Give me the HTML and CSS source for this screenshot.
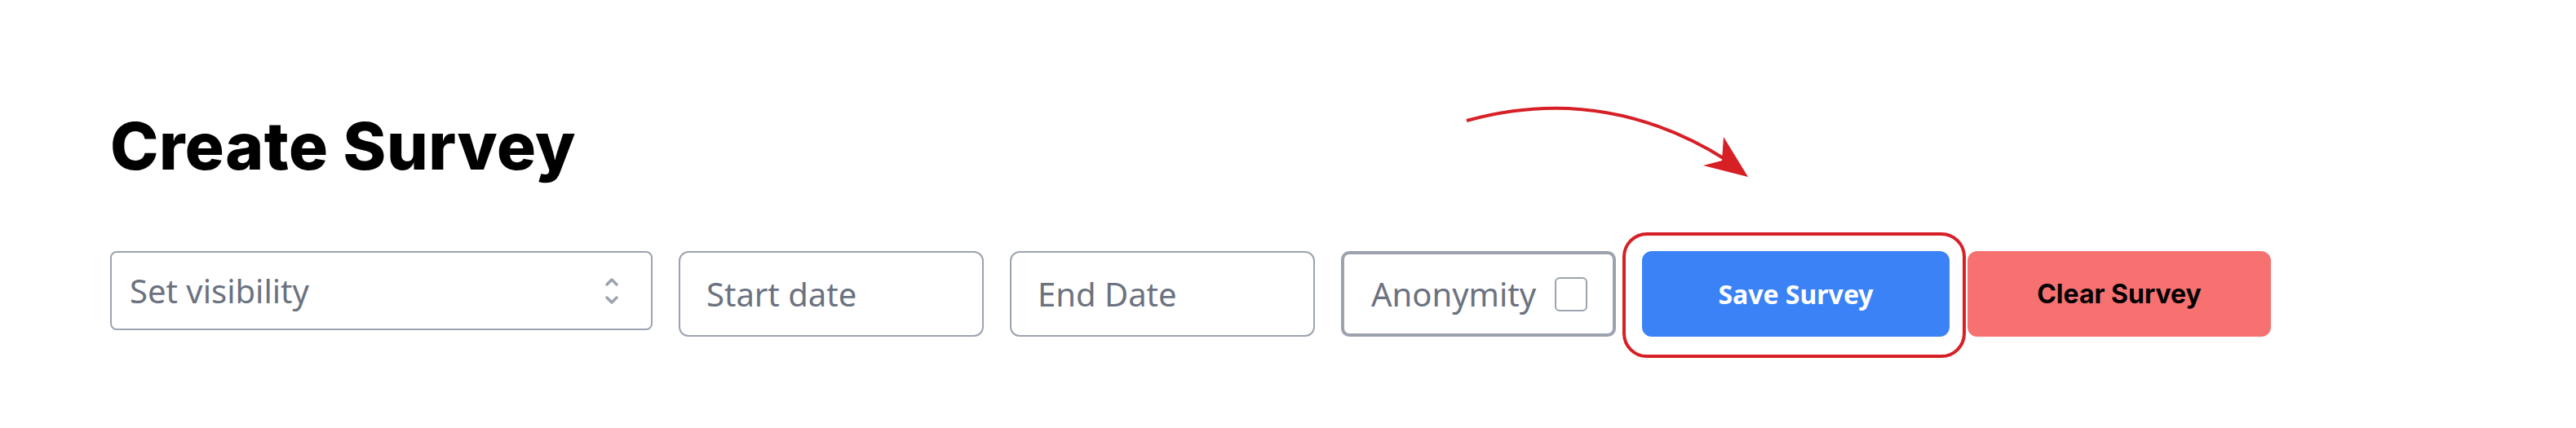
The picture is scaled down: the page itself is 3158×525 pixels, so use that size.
FILE: index.html
```html
<!DOCTYPE html>
<html lang="en">
<head>
    <meta charset="UTF-8">
    <title>Create Survey</title>
    <link rel="stylesheet" href="styles.css">
</head>
<body>
    <div class="page">
        <h1 class="title">Create Survey</h1>

        <div class="toolbar">
            <div class="field select-field">
                <span>Set visibility</span>
                <svg class="chevrons" width="20" height="42" viewBox="0 0 20 42">
                    <path d="M4 13 L10 7 L16 13" />
                    <path d="M4 29 L10 35 L16 29" />
                </svg>
            </div>
            <div class="field date-field"><span>Start date</span></div>
            <div class="field date-field"><span>End Date</span></div>
            <label class="field anon-field">
                <span>Anonymity</span>
                <span class="checkbox"></span>
            </label>
            <div class="save-wrap">
                <button class="btn btn-save">Save Survey</button>
            </div>
            <button class="btn btn-clear">Clear Survey</button>
        </div>

        <!-- flecha de anotacion -->
        <svg class="arrow" width="380" height="110" viewBox="0 0 380 110">
            <path class="arrow-line" d="M18 28 C 105 4, 215 0, 336 76" />
            <path class="arrow-head" d="M363 97 L333 48 L331 77 L308 83 Z" />
        </svg>
    </div>
</body>
</html>
```

FILE: styles.css
```css
body {
    margin: 0;
    padding: 0;
    background: #ffffff;
    font-family: 'Noto Sans', sans-serif;
}

.page {
    position: relative;
    padding: 131px 0 0 135px;
    height: 394px;
}

.title {
    margin: 0 0 81px 0;
    font-family: 'Inter', sans-serif;
    font-weight: 800;
    font-size: 80px;
    line-height: 1.2;
    color: #000000;
    letter-spacing: 0.5px;
}

.toolbar {
    display: flex;
    align-items: flex-start;
    gap: 32px;
}

.field {
    box-sizing: border-box;
    display: flex;
    align-items: center;
    border: 2px solid #9ca3af;
    border-radius: 10px;
    background: #ffffff;
    color: #6b7280;
    font-size: 40px;
}

.select-field {
    width: 665px;
    height: 97px;
    padding: 0 38px 0 22px;
    justify-content: space-between;
    border-radius: 8px;
}

.chevrons path {
    fill: none;
    stroke: #9ca3af;
    stroke-width: 3.5;
    stroke-linecap: round;
    stroke-linejoin: round;
}

.date-field {
    width: 374px;
    height: 105px;
    padding-left: 32px;
    border-radius: 12px;
}

.anon-field {
    width: 337px;
    height: 105px;
    padding: 0 31px 0 33px;
    border: 4px solid #9ca3af;
    justify-content: space-between;
}

.checkbox {
    width: 40px;
    height: 42px;
    box-sizing: border-box;
    border: 2px solid #9ca3af;
    border-radius: 6px;
}

.btn {
    box-sizing: border-box;
    height: 105px;
    border: none;
    border-radius: 12px;
    font-weight: 700;
    font-size: 32px;
    cursor: pointer;
}

.save-wrap {
    position: relative;
}

.save-wrap::after {
    content: '';
    position: absolute;
    left: -24px;
    right: -20px;
    top: -23px;
    bottom: -26px;
    border: 4px solid #d71f26;
    border-radius: 30px;
}

.btn-save {
    width: 377px;
    background: #3b82f6;
    color: #ffffff;
    font-family: 'Noto Sans', sans-serif;
}

.btn-clear {
    width: 372px;
    margin-left: -10px;
    background: #f87171;
    color: #000000;
    font-family: 'Inter', sans-serif;
}

.arrow {
    position: absolute;
    left: 1780px;
    top: 120px;
}

.arrow-line {
    fill: none;
    stroke: #d71f26;
    stroke-width: 4;
}

.arrow-head {
    fill: #d71f26;
}
```
